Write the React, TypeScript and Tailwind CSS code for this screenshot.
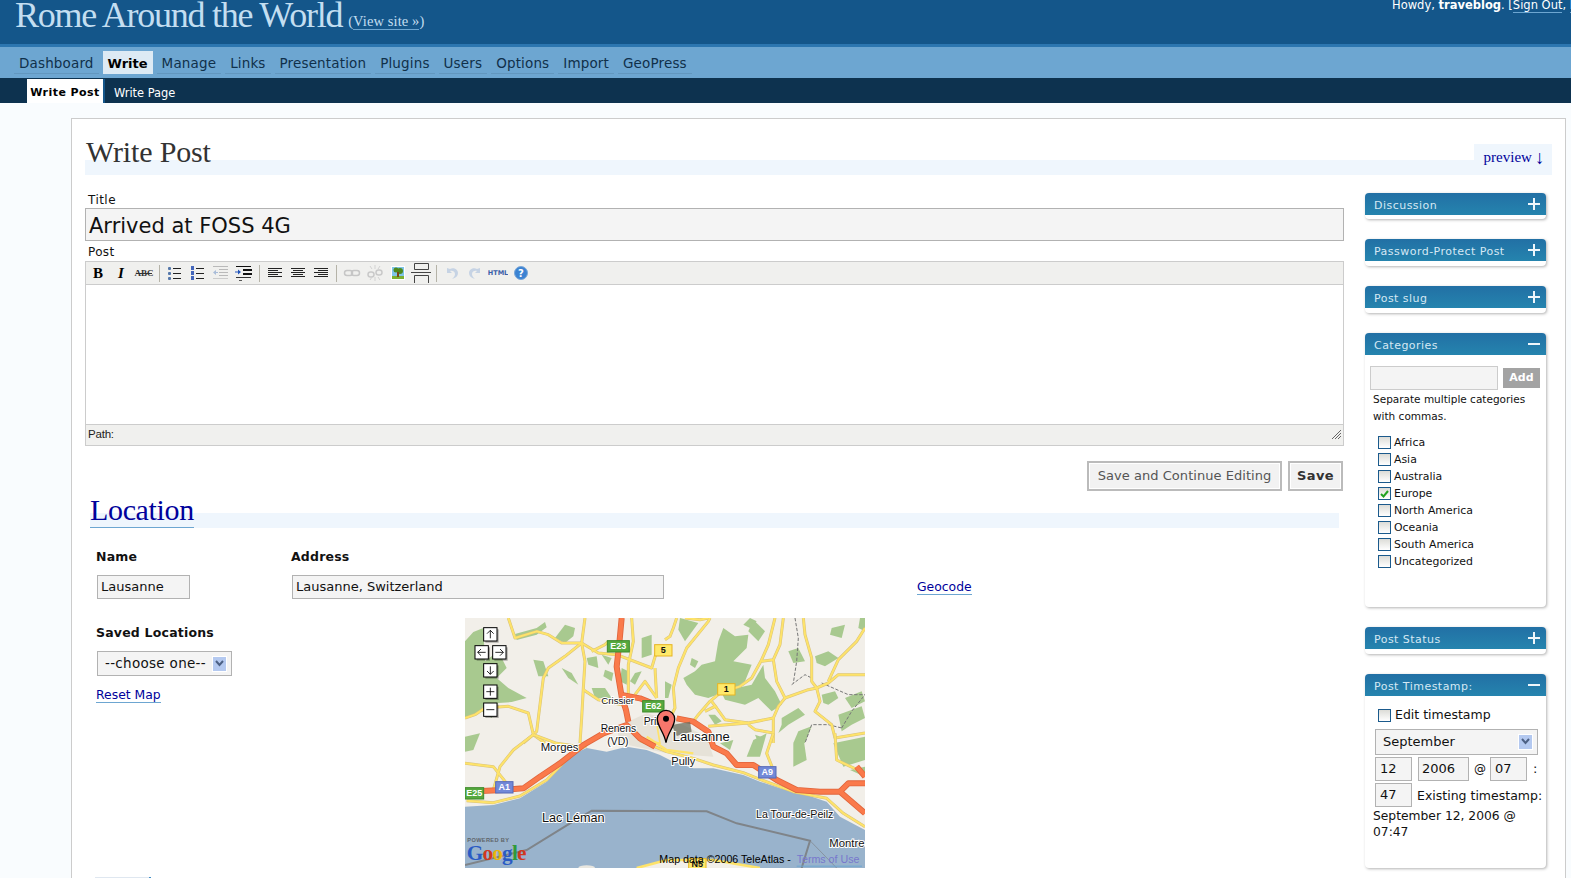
import React from "react";

const sans = "font-['DejaVu_Sans',sans-serif]";
const serif = "font-['Liberation_Serif',serif]";

const navItems = ["Dashboard", "Write", "Manage", "Links", "Presentation", "Plugins", "Users", "Options", "Import", "GeoPress"];

function Ic({ children }: { children: React.ReactNode }) {
  return (
    <div className="flex h-[20px] w-[23px] items-center justify-center">
      <svg width="20" height="20" viewBox="0 0 20 20">{children}</svg>
    </div>
  );
}
const Sep = () => (
  <div className="flex w-[8px] justify-center">
    <div className="h-[17px] w-px bg-[#b5b3a8]" />
  </div>
);

function lines(xs: number[], ys: number[], c = "#222") {
  return ys.map((y, i) => <rect key={i} x={xs[i * 2]} y={y} width={xs[i * 2 + 1]} height="1" fill={c} />);
}

function Toolbar() {
  return (
    <div className="flex h-[23px] items-center border-b border-[#ccc] bg-[#f0f0ee]">
      <Ic><text x="10" y="14.5" textAnchor="middle" fontFamily="Liberation Serif" fontWeight="700" fontSize="15" fill="#000">B</text></Ic>
      <Ic><text x="10" y="14.5" textAnchor="middle" fontFamily="Liberation Serif" fontWeight="700" fontStyle="italic" fontSize="15" fill="#000">I</text></Ic>
      <Ic>
        <text x="10" y="13" textAnchor="middle" fontFamily="Liberation Serif" fontWeight="700" fontSize="9" fill="#333">ABC</text>
        <rect x="2" y="10" width="16" height="1" fill="#333" />
      </Ic>
      <Sep />
      <Ic>
        {[4, 9, 14].map((y) => <rect key={y} x="3" y={y} width="3" height="3" rx="1" fill="#5577aa" />)}
        {[5, 10, 15].map((y) => <rect key={y} x="8" y={y} width="8" height="1" fill="#222" />)}
      </Ic>
      <Ic>
        {[3, 8, 13].map((y) => <rect key={y} x="3" y={y} width="3" height="4" fill="#4466bb" />)}
        {[5, 10, 15].map((y) => <rect key={y} x="8" y={y} width="8" height="1" fill="#222" />)}
      </Ic>
      <Ic>
        {lines([8, 9, 8, 9, 8, 9], [6, 9, 12], "#b9b9b9")}
        <rect x="2" y="3" width="15" height="1" fill="#b9b9b9" />
        <path d="M2 9.5 L5 7 L5 12Z M5 9h2v1h-2z" fill="#a9bcd8" />
        <rect x="2" y="15" width="15" height="1" fill="#ccc" />
      </Ic>
      <Ic>
        <rect x="2" y="3" width="15" height="1" fill="#111" />
        <rect x="9" y="6" width="9" height="2" fill="#111" />
        <rect x="9" y="10" width="9" height="2" fill="#111" />
        <path d="M7 9 L4 6.5 L4 11.5Z M1 8.5h3v1h-3z" fill="#2255bb" />
        <rect x="2" y="14" width="15" height="1" fill="#333" />
        <rect x="5" y="17" width="3" height="1" fill="#555" />
      </Ic>
      <Sep />
      <Ic>{lines([3, 14, 3, 10, 3, 14, 3, 10, 3, 14], [5, 7, 9, 11, 13])}</Ic>
      <Ic>{lines([3, 14, 5, 10, 3, 14, 5, 10, 3, 14], [5, 7, 9, 11, 13])}</Ic>
      <Ic>{lines([3, 14, 7, 10, 3, 14, 7, 10, 3, 14], [5, 7, 9, 11, 13])}</Ic>
      <Sep />
      <Ic>
        <rect x="2.5" y="7.5" width="8" height="5" rx="2.5" fill="none" stroke="#c6c6c6" strokeWidth="1.5" />
        <rect x="9.5" y="7.5" width="8" height="5" rx="2.5" fill="none" stroke="#c6c6c6" strokeWidth="1.5" />
      </Ic>
      <Ic>
        <rect x="3" y="9" width="6" height="5" rx="2.5" fill="none" stroke="#c9c9c9" strokeWidth="1.5" />
        <rect x="11" y="7" width="6" height="5" rx="2.5" fill="none" stroke="#c9c9c9" strokeWidth="1.5" />
        <path d="M10 2v4M10 14v4M5 3l2 3M15 3l-2 3M5 17l2-3M15 17l-2-3" stroke="#d2d2d2" strokeWidth="1" />
      </Ic>
      <Ic>
        <rect x="3" y="3" width="14" height="14" fill="#fff" />
        <rect x="4" y="4" width="12" height="9" fill="#7fc4e8" />
        <rect x="4" y="13" width="12" height="3" fill="#7cb030" />
        <circle cx="8" cy="7" r="2.5" fill="#4e8a1e" />
        <circle cx="12" cy="8" r="3" fill="#4e8a1e" />
        <rect x="9" y="9" width="2" height="5" fill="#7a4a14" />
      </Ic>
      <Ic>
        <path d="M3.5 0.5h14v6h-14zM0 9.5h20" fill="none" stroke="#444" strokeWidth="1" />
        <path d="M3.5 20v-7.5h14V20" fill="none" stroke="#444" strokeWidth="1" />
      </Ic>
      <Sep />
      <Ic>
        <path d="M5 5v5h5l-2-2c3-1 5 1 5 3 0 2-1 3-3 5 4-1 6-3 6-6 0-4-5-6-8-4z" fill="#c6d3e4" />
      </Ic>
      <Ic>
        <path d="M15 5v5h-5l2-2c-3-1-5 1-5 3 0 2 1 3 3 5-4-1-6-3-6-6 0-4 5-6 8-4z" fill="#c6d3e4" />
      </Ic>
      <Ic>
        <text x="10" y="12" textAnchor="middle" fontFamily="DejaVu Sans" fontWeight="700" fontSize="6.5" fill="#3b5fa8">HTML</text>
      </Ic>
      <Ic>
        <circle cx="10" cy="10" r="6.5" fill="#3c83d2" stroke="#7aa7d8" strokeWidth="1" />
        <text x="10" y="13.5" textAnchor="middle" fontFamily="DejaVu Sans" fontWeight="700" fontSize="10" fill="#fff">?</text>
      </Ic>
    </div>
  );
}

function Chevron() {
  return (
    <div className="flex h-[16px] w-[15px] items-center justify-center border border-white bg-[#b4c9f0]">
      <svg width="9" height="7" viewBox="0 0 9 7"><path d="M1 1l3.5 4L8 1" fill="none" stroke="#4d6185" strokeWidth="2" /></svg>
    </div>
  );
}

function Box({ title, open, children, h }: { title: string; open?: boolean; children?: React.ReactNode; h: string }) {
  return (
    <div className={`mb-[20px] w-[181px] rounded-[4px] bg-white shadow-[1px_1px_3px_rgba(0,0,0,0.3)] ${h}`}>
      <div className="flex h-[22px] items-center justify-between rounded-t-[4px] bg-[linear-gradient(#2270a5,#2584ae)] pl-[9px] pr-[6px] text-[11px] tracking-[0.47px] text-[#d5e8f4]">
        <span className="pt-[5px]">{title}</span>
        <svg width="12" height="12" viewBox="0 0 12 12">
          <rect x="0" y="5" width="12" height="2" fill="#eef6fb" />
          {!open && <rect x="5" y="0" width="2" height="12" fill="#eef6fb" />}
        </svg>
      </div>
      {children}
    </div>
  );
}

function Check({ on }: { on?: boolean }) {
  return (
    <div className="flex h-[13px] w-[13px] shrink-0 items-center justify-center border border-[#1b5a8c] bg-[linear-gradient(#dcdcd7,#fff)]">
      {on && <svg width="9" height="8" viewBox="0 0 9 8"><path d="M1 4l2.5 2.5L8 1" fill="none" stroke="#21a121" strokeWidth="2" /></svg>}
    </div>
  );
}

const field = "flex items-center border border-[#b2b2b2] bg-[#f4f4f4] text-[#111]";

function MapPic() {
  const greensLeft = [
    "0,70 25,42 55,30 60,130 100,100 125,150 95,180 130,210 185,240 140,252 100,255 80,300 50,280 0,300",
    "150,48 215,30 240,12 245,28 215,50 155,66",
    "205,125 235,130 250,175 220,175",
    "300,20 330,30 325,55 300,75 270,60",
    "365,120 395,115 400,150 370,140",
    "420,155 445,165 440,190 415,175",
    "380,210 420,210 440,240 390,240",
    "510,165 530,160 510,200 495,190",
    "290,150 320,165 340,200 310,180",
    "530,60 560,50 560,110 530,120",
    "410,110 440,120 430,140",
    "470,150 490,160 485,200 465,190",
  ];
  const greensRight = [
    "110,140 150,130 160,70 175,30 210,55 250,50 245,90 205,130 260,140 240,190 215,210 260,200 295,140 300,180 330,220 350,260 320,280 280,240 240,260 180,245 170,225 130,240 90,230 65,200 55,180 90,160",
    "45,0 100,15 60,70 40,35",
    "255,0 275,10 255,30 235,20",
    "500,30 540,20 530,60 495,50",
    "370,100 400,90 420,130 385,135",
    "450,115 490,100 520,120 480,145 455,135",
    "585,0 600,0 600,40 580,30",
    "470,230 510,220 520,240 490,260 475,255",
    "350,300 400,270 420,290 370,320 340,345 350,320",
    "540,240 590,220 600,250 560,270",
    "400,340 440,325 420,375 385,375",
    "520,290 590,265 600,300 560,320 530,340",
    "80,120 100,130 90,150 75,140",
    "270,350 300,360 280,375",
    "0,190 20,200 10,240 0,240",
    "130,290 150,290 170,310 150,320",
    "265,5 300,40 280,70 250,40",
  ];
  const greensLow = [
    "15,380 60,370 40,420 15,425",
    "880,390 920,370 900,440 860,440",
    "1000,400 1030,380 1040,450 1000,470",
    "1120,400 1215,380 1215,450 1150,470",
    "780,400 820,390 810,420",
    "1170,480 1215,470 1215,500",
  ];
  const roadsLeft = [
    "130,0 150,60 215,40 250,50 290,75 350,75 400,105 455,110",
    "350,75 300,115 250,150 235,180 215,340 205,350 190,285 130,265 60,270 30,290 0,300",
    "350,75 360,130 355,210 350,300 345,375",
    "360,0 350,75",
    "355,215 400,245 470,260",
    "205,350 240,375",
    "205,350 175,375",
    "380,100 420,80 430,70",
    "500,0 505,70 490,140 490,230",
    "455,110 560,150 575,100",
    "570,150 575,240",
    "575,240 540,190 510,230",
  ];
  const roadsRight = [
    "35,0 25,30 15,55 0,65",
    "135,0 130,10 65,90 40,150 25,210 30,270 15,300",
    "60,0 105,5 130,0",
    "330,0 310,80 290,125 260,180 225,205 165,225 135,250 100,290 85,310",
    "355,0 345,80 325,125 290,130",
    "325,125 335,190 360,240 340,265 325,300 250,315 180,305 155,270 140,250",
    "150,265 120,280",
    "250,315 130,325",
    "325,300 325,375",
    "250,320 270,335 325,345",
    "360,240 430,215 455,210 490,195 520,170 560,170 600,170",
    "415,0 420,50 440,120 440,190 455,210",
    "600,30 575,70 520,125 490,190",
    "455,210 465,250 450,280 500,320 510,360 600,345",
  ];
  const roadsLow = [
    "220,374 160,420 120,470 100,540",
    "220,374 290,400 360,410",
    "15,460 100,470 140,520",
    "1125,370 1130,450 1215,490",
    "940,370 920,430 940,480",
    "720,380 760,400",
  ];
  const shore = ["20,572 100,578 180,558 260,510 340,427 380,407", "540,392 620,425 700,445 760,465 850,488 900,508 1000,545 1100,565 1150,610 1215,650"];
  const trails = [
    "390,0 400,60 395,130 385,195",
    "380,200 420,170 440,180",
    "440,320 420,375",
    "445,320 490,320 530,330",
    "530,330 560,280 600,230",
    "470,195 550,230 600,230",
  ];
  const orange: string[] = [
    "485,24 478,100 470,170 485,260 498,300 505,335",
    "15,545 130,540 190,535 240,500 300,460 370,405 430,370 500,345 540,385 585,410",
    "485,255 540,265 590,285 605,300",
    "650,325 700,335 745,365 760,410 800,430 830,465 880,465 950,510 1010,540 1080,545 1140,545 1215,610",
    "1140,545 1165,520 1215,520",
    "1190,470 1215,500",
  ];
  const Ctrl = ({ x, y, d }: { x: number; y: number; d: string }) => (
    <g>
      <rect x={x + 5} y={y + 5} width="40" height="40" fill="#000" opacity="0.3" />
      <rect x={x} y={y} width="40" height="40" fill="#fff" stroke="#000" strokeWidth="3" />
      <path d={d} transform={`translate(${x},${y})`} fill="none" stroke="#000" strokeWidth="2.5" />
    </g>
  );
  const up = "M20 32V8M10 18L20 8L30 18";
  const down = "M20 8V32M10 22L20 32L30 22";
  const left = "M32 20H8M18 10L8 20L18 30";
  const right = "M8 20H32M22 10L32 20L22 30";
  const label = { fontFamily: "Liberation Sans", stroke: "#fff", strokeWidth: 6, paintOrder: "stroke", fill: "#111" } as const;
  const Shield = ({ x, y, w, t, c, b, tc }: { x: number; y: number; w: number; t: string; c: string; b: string; tc: string }) => (
    <g>
      <rect x={x} y={y} width={w} height="34" fill={c} stroke={b} strokeWidth="3" />
      <text x={x + w / 2} y={y + 26} textAnchor="middle" fontFamily="Liberation Sans" fontWeight="700" fontSize="27" fill={tc}>{t}</text>
    </g>
  );
  const roads = (arr: string[], tx: number, ty: number) => (
    <g transform={`translate(${tx} ${ty})`}>
      {arr.map((p, i) => <polyline key={`o${i}`} points={p} fill="none" stroke="#d8c27a" strokeWidth="9" strokeLinejoin="round" />)}
      {arr.map((p, i) => <polyline key={`i${i}`} points={p} fill="none" stroke="#fee36a" strokeWidth="6" strokeLinejoin="round" />)}
    </g>
  );
  return (
    <svg className="block" width="400" height="250" viewBox="15 24 1200 750">
      <rect x="15" y="24" width="1200" height="750" fill="#f2efe9" />
      <g transform="translate(15 24)" fill="#a8c98f">{greensLeft.map((p, i) => <polygon key={i} points={p} />)}</g>
      <g transform="translate(615 24)" fill="#a8c98f">{greensRight.map((p, i) => <polygon key={i} points={p} />)}</g>
      <g fill="#a8c98f">{greensLow.map((p, i) => <polygon key={i} points={p} />)}</g>
      <polygon points="470,350 560,310 640,330 740,380 760,440 620,430 480,400" fill="#e6e2d8" />
      <g transform="translate(615 24)" fill="none" stroke="#777" strokeWidth="3" strokeDasharray="10 5">
        {trails.map((p, i) => <polyline key={i} points={p} />)}
      </g>
      {roads(roadsLeft, 15, 24)}
      {roads(roadsRight, 615, 24)}
      {roads(roadsLow, 0, 0)}
      <polygon
        points="15,590 100,585 180,565 260,515 340,432 380,414 440,425 500,410 560,420 600,435 640,455 700,475 760,475 850,495 900,515 960,535 1040,555 1100,575 1140,620 1215,660 1215,774 900,774 760,752 620,752 530,774 15,774"
        fill="#99b3cc"
      />
      {roads(shore, 0, 0)}
      <polyline points="530,774 620,750 760,750 900,774" fill="none" stroke="#fee36a" strokeWidth="8" />
      <polyline points="560,380 620,420 700,430" fill="none" stroke="#fee36a" strokeWidth="7" />
      <polyline points="590,340 600,400 560,390" fill="none" stroke="#fee36a" strokeWidth="5" />
      <polyline points="15,765 200,720 330,640 395,602 740,604 830,640 1050,692 1025,774" fill="none" stroke="#7f8489" strokeWidth="6" />
      <polyline points="1050,692 1130,774" fill="none" stroke="#7f8489" strokeWidth="2" />
      <ellipse cx="380" cy="774" rx="25" ry="8" fill="#e9e7e0" />
      {orange.map((p, i) => <polyline key={i} points={p} fill="none" stroke="#e0653c" strokeWidth="18" strokeLinejoin="round" />)}
      {orange.map((p, i) => <polyline key={i} points={p} fill="none" stroke="#fa7a4b" strokeWidth="13" strokeLinejoin="round" />)}
      <polygon points="635,345 690,335 695,365 650,378" fill="#6b6e5e" opacity="0.75" />
      <Shield x={442} y={92} w={66} t="E23" c="#56a93e" b="#3f8a2c" tc="#fff" />
      <Shield x={584} y={104} w={52} t="5" c="#ffe96b" b="#e6b422" tc="#111" />
      <Shield x={773} y={221} w={52} t="1" c="#ffe96b" b="#e6b422" tc="#111" />
      <Shield x={548} y={272} w={64} t="E62" c="#56a93e" b="#3f8a2c" tc="#fff" />
      <Shield x={896} y={470} w={52} t="A9" c="#7289d8" b="#5569b8" tc="#fff" />
      <Shield x={107} y={515} w={52} t="A1" c="#7289d8" b="#5569b8" tc="#fff" />
      <Shield x={15} y={533} w={56} t="E25" c="#56a93e" b="#3f8a2c" tc="#fff" />
      <Shield x={686} y={746} w={52} t="N5" c="#ffe96b" b="#e6b422" tc="#111" />
      <text x="424" y="281" fontSize="29" {...label}>Crissier</text>
      <text x="422" y="367" fontSize="31" {...label}>Renens</text>
      <text x="442" y="405" fontSize="31" {...label}>(VD)</text>
      <text x="242" y="422" fontSize="34" {...label}>Morges</text>
      <text x="551" y="346" fontSize="31" {...label}>Prilly</text>
      <text x="638" y="392" fontSize="39" {...label}>Lausanne</text>
      <text x="634" y="466" fontSize="33" {...label}>Pully</text>
      <text x="246" y="635" fontSize="38" {...label}>Lac Léman</text>
      <text x="888" y="623" fontSize="32" {...label}>La Tour-de-Peilz</text>
      <text x="1108" y="712" fontSize="34" {...label}>Montre</text>
      <path d="M618 398 C612 365 592 350 592 327 A26 26 0 0 1 644 327 C644 350 624 365 618 398Z" fill="#f8776c" stroke="#000" strokeWidth="4" />
      <circle cx="618" cy="326" r="9" fill="#000" />
      <text x="598" y="758" fontSize="32" fontFamily="Liberation Sans" fill="#000">Map data ©2006 TeleAtlas -</text>
      <text x="1010" y="758" fontSize="32" fontFamily="Liberation Sans" fill="#7777cc">Terms of Use</text>
      <rect x="1010" y="767" width="196" height="3" fill="#6da6d1" />
      <text x="22" y="697" fontSize="17" fontWeight="700" fontFamily="Liberation Sans" letterSpacing="1" fill="#5f6468">POWERED BY</text>
      <text x="20" y="749" fontSize="64" fontFamily="Liberation Serif" letterSpacing="-2.5" fontWeight="700">
        <tspan fill="#2a5bc4">G</tspan><tspan fill="#d0371f">o</tspan><tspan fill="#e7b50c">o</tspan><tspan fill="#2a5bc4">g</tspan><tspan fill="#2f9a3a">l</tspan><tspan fill="#d0371f">e</tspan>
      </text>
      <Ctrl x={71} y={53} d={up} />
      <Ctrl x={45} y={107} d={left} />
      <Ctrl x={98} y={107} d={right} />
      <Ctrl x={71} y={161} d={down} />
      <Ctrl x={71} y={225} d="M20 8V32M8 20H32" />
      <Ctrl x={71} y={279} d="M8 20H32" />
    </svg>
  );
}

export default function App() {
  return (
    <div className={`h-[878px] overflow-hidden bg-[#f9fcfe] ${sans}`}>
      <div className="flex h-[44px] justify-between overflow-hidden bg-[#14568a]">
        <div className={`flex items-start pl-[15px] ${serif}`}>
          <h1 className="mt-[-6px] text-[36px] leading-[42px] tracking-[-1.25px] text-[#c3def1]">Rome Around the World</h1>
          <a className="ml-[6px] mt-[13px] text-[14.5px] leading-[16px] tracking-[0.1px] text-[#c3def1]">(<span className="border-b border-[#6da6d1]">View site »</span>)</a>
        </div>
        <div className="mt-[-2px] w-[179px] shrink-0 overflow-hidden whitespace-nowrap text-[11.5px] leading-[14px] text-white">
          Howdy, <b>traveblog</b>. [<span className="border-b border-[#6da6d1]">Sign Out</span>, <span className="border-b border-[#6da6d1]">Profile</span>]
        </div>
      </div>
      <div className="flex h-[34px] gap-[4px] border-t-[3px] border-[#2c76b0] bg-[#6da6d1] pl-[14px] pt-[4px]">
        {navItems.map((n) => (
          <div
            key={n}
            className={n === "Write"
              ? "h-[23px] w-[50px] bg-[#ddeaf4] pl-[5px] pt-px text-[13px] font-bold leading-[23px] text-black"
              : "h-[23px] border-b border-[#6297bf] px-[5px] pt-px text-[13.5px] leading-[22px] tracking-[0.15px] text-[#10304a]"}
          >
            {n}
          </div>
        ))}
      </div>
      <div className="flex h-[25px] items-end bg-[#0d324f] pl-[27px]">
        <div className="flex h-[24px] w-[78px] items-center justify-center border-r-2 border-[#14568a] bg-white pt-[5px] text-[11px] font-bold tracking-[0.45px] text-black">Write Post</div>
        <div className="flex h-[24px] items-center pl-[9px] pt-[5px] text-[11.4px] text-white">Write Page</div>
      </div>

      <div className="ml-[71px] mr-[5px] mt-[15px] h-[800px] border border-b-0 border-[#ccc] bg-white pl-[13px] pr-[13px] pt-[25px]">
        <div className="flex h-[31px] justify-between bg-[linear-gradient(transparent_16px,#eff6fd_16px)]">
          <h2 className={`pl-px text-[30px] leading-[16px] tracking-[-0.15px] text-[#333] ${serif}`}>Write Post</h2>
          <a className={`flex w-[78px] items-center justify-center gap-[3px] bg-[#eff6fd] pb-[4px] pl-[2px] text-[15px] text-[#00019b] ${serif}`}>preview <span className="text-[19px] leading-[16px]">↓</span></a>
        </div>

        <div className="flex items-start">
          <div className="w-[1259px] shrink-0">
            <div className="pl-[3px] pt-[17px] text-[12px] leading-[16px] tracking-[0.45px] text-[#111]">Title</div>
            <div className={`${field} h-[33px] pl-[3px] pt-[5px] text-[21px]`}>Arrived at FOSS 4G</div>
            <div className="pl-[3px] pt-[2px] text-[12px] leading-[18px] tracking-[0.35px] text-[#111]">Post</div>
            <div className="border border-[#ccc]">
              <Toolbar />
              <div className="h-[139px] bg-white" />
              <div className="flex h-[21px] items-center justify-between border-t border-[#ccc] bg-[#f0f0ee] pb-px pl-[2px] pr-px font-['Liberation_Sans',sans-serif] text-[11.5px] tracking-[-0.2px] text-[#222]">
                <span>Path:</span>
                <svg width="11" height="11" viewBox="0 0 11 11"><path d="M10 1L1 10M10 4L4 10M10 7L7 10" stroke="#666" strokeWidth="1" /></svg>
              </div>
            </div>
            <div className="mr-px mt-[15px] flex justify-end gap-[6px]">
              <div className="flex h-[30px] w-[195px] items-center justify-center border-2 border-[#bbb] bg-[#f2f2f2] text-[13px] tracking-[0.05px] text-[#555] shadow-[inset_0_0_0_1px_#fff]">Save and Continue Editing</div>
              <div className="flex h-[30px] w-[55px] items-center justify-center border-2 border-[#bbb] bg-[#f2f2f2] text-[13px] font-bold tracking-[0.35px] text-[#333] shadow-[inset_0_0_0_1px_#fff]">Save</div>
            </div>
            <div className="ml-[5px] mr-[5px] mt-[6px] h-[31px] bg-[linear-gradient(transparent_16px,#eff6fd_16px)]">
              <h2 className={`inline-block h-[31px] border-b border-[#6da6d1] text-[30px] leading-[26px] tracking-[-0.35px] text-[#00019b] ${serif}`}>Location</h2>
            </div>
            <div className="flex items-start">
              <div className="w-[206px] shrink-0 pl-[11px]">
                <div className="pt-[21px] text-[12.5px] font-bold leading-[16px] tracking-[0.2px] text-[#111]">Name</div>
                <div className={`${field} ml-px mt-[10px] h-[24px] w-[93px] pl-[3px] text-[13px]`}>Lausanne</div>
                <div className="pt-[26px] text-[12.5px] font-bold leading-[16px] tracking-[0.2px] text-[#111]">Saved Locations</div>
                <div className={`${field} ml-px mt-[10px] h-[25px] w-[135px] justify-between pl-[7px] pr-[4px] text-[13.5px] tracking-[0.3px]`}>
                  <span>--choose one--</span>
                  <Chevron />
                </div>
                <div className="mt-[11px] inline-block border-b border-[#6da6d1] text-[12.4px] leading-[15px] text-[#00019b]">Reset Map</div>
                <div className="ml-[-1px] mt-[171px] h-[6px] w-[56px] border-r-2 border-[#3f8dc7] bg-[#dfe7f0]" />
              </div>
              <div className="flex-1">
                <div className="pt-[21px] text-[12.5px] font-bold leading-[16px] tracking-[0.2px] text-[#111]">Address</div>
                <div className="mt-[10px] flex items-center">
                  <div className={`${field} ml-px h-[24px] w-[372px] pl-[3px] text-[13px]`}>Lausanne, Switzerland</div>
                  <a className="ml-[253px] border-b border-[#6da6d1] text-[12.4px] leading-[15px] text-[#00019b]">Geocode</a>
                </div>
                <div className="ml-[174px] mt-[19px]">
                  <MapPic />
                </div>
              </div>
            </div>
          </div>

          <div className="ml-[21px] w-[181px] shrink-0 pt-[18px] text-[11.5px] text-[#111]">
            <Box title="Discussion" h="h-[26px]" />
            <Box title="Password-Protect Post" h="h-[27px]" />
            <Box title="Post slug" h="h-[27px]" />
            <Box title="Categories" open h="h-[274px]">
              <div className="flex items-center gap-[5px] pl-[5px] pt-[11px]">
                <div className="h-[24px] w-[128px] border border-[#ccc] bg-[#f4f4f4]" />
                <div className="flex h-[20px] w-[37px] items-center justify-center bg-[#a3a3a3] text-[11px] font-bold text-white">Add</div>
              </div>
              <div className="pl-[8px] pt-[1px] text-[10.5px] leading-[17px]">Separate multiple categories<br />with commas.</div>
              <div className="flex flex-col pl-[13px] pt-[9px] text-[10.9px]">
                {["Africa", "Asia", "Australia", "Europe", "North America", "Oceania", "South America", "Uncategorized"].map((c) => (
                  <div key={c} className="flex h-[17px] items-center gap-[3px]">
                    <Check on={c === "Europe"} />
                    <span className="pt-px">{c}</span>
                  </div>
                ))}
              </div>
            </Box>
            <Box title="Post Status" h="h-[27px]" />
            <Box title="Post Timestamp:" open h="h-[194px]">
              <div className="flex items-center gap-[4px] pl-[13px] pt-[10px] text-[12.5px]">
                <Check />
                <span>Edit timestamp</span>
              </div>
              <div className={`${field} ml-[10px] mt-[4px] h-[26px] w-[163px] justify-between pl-[7px] pr-[4px] text-[13px]`}>
                <span>September</span>
                <Chevron />
              </div>
              <div className="flex items-center pl-[10px] pt-[2px] text-[13px]">
                <div className={`${field} h-[24px] w-[37px] pl-[4px]`}>12</div>
                <div className={`${field} ml-[6px] h-[24px] w-[51px] pl-[3px]`}>2006</div>
                <span className="ml-[5px] w-[16px] text-[12px]">@</span>
                <div className={`${field} h-[24px] w-[37px] pl-[4px]`}>07</div>
                <span className="ml-[6px]">:</span>
              </div>
              <div className="flex items-center whitespace-nowrap pl-[10px] pt-[2px] text-[13px]">
                <div className={`${field} h-[24px] w-[37px] pl-[4px]`}>47</div>
                <span className="ml-[5px] mt-[3px] text-[12.5px]">Existing timestamp:</span>
              </div>
              <div className="pl-[8px] pt-[1px] text-[12.3px] leading-[16px]">September 12, 2006 @<br />07:47</div>
            </Box>
          </div>
        </div>
      </div>
    </div>
  );
}
